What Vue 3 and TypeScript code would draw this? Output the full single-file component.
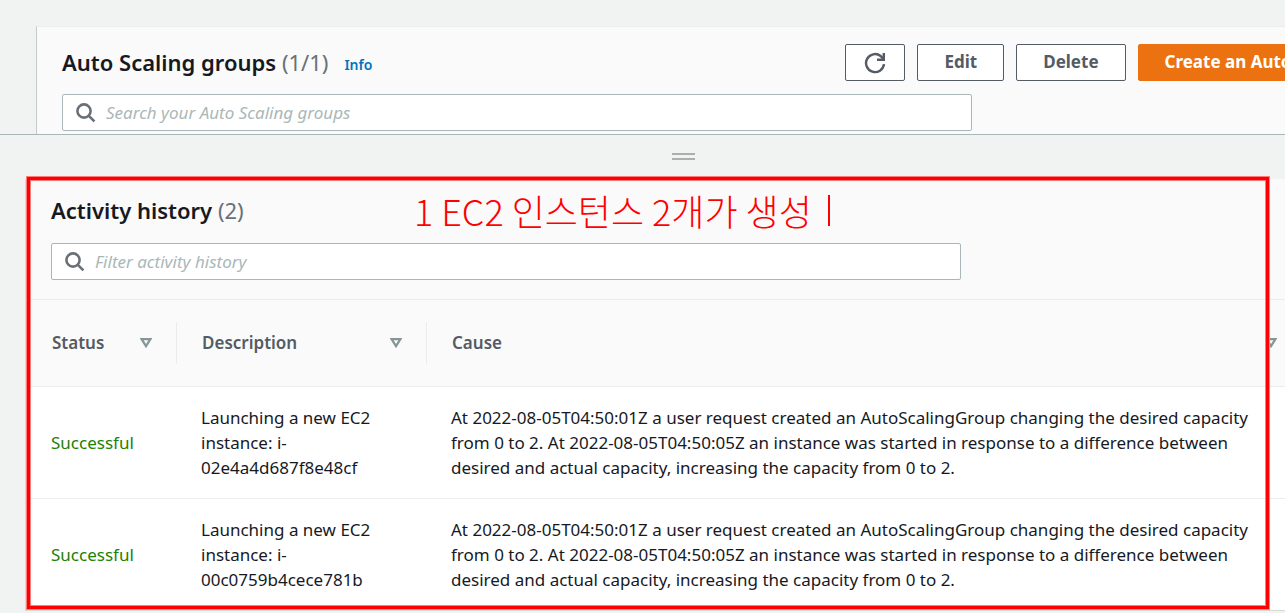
<script setup lang="ts">
import { ref } from 'vue'

interface Activity {
  status: string
  description: string
  cause: string
}

const cause =
  'At 2022-08-05T04:50:01Z a user request created an AutoScalingGroup changing the desired capacity from 0 to 2. At 2022-08-05T04:50:05Z an instance was started in response to a difference between desired and actual capacity, increasing the capacity from 0 to 2.'

const activities: Activity[] = [
  { status: 'Successful', description: 'Launching a new EC2 instance: i-02e4a4d687f8e48cf', cause },
  { status: 'Successful', description: 'Launching a new EC2 instance: i-00c0759b4cece781b', cause },
]

const columns = ['Status', 'Description', 'Cause']
const groupQuery = ref('')
const historyQuery = ref('')
</script>

<template>
  <div class="page">
    <section class="groups">
      <div class="groups-card">
        <header class="groups-header">
          <h2>Auto Scaling groups <span class="count">(1/1)</span></h2>
          <a class="info" href="#info">Info</a>
          <div class="actions">
            <button class="btn icon-btn" type="button" aria-label="Refresh">
              <svg width="22" height="22" viewBox="0 0 22 22" fill="none" stroke="currentColor" stroke-width="2.4">
                <path d="M20 12.2a9 9 0 1 1-3.4-8.2l2.4 2.4" />
                <path d="M19.8 1v6.8H13" />
              </svg>
            </button>
            <button class="btn" type="button">Edit</button>
            <button class="btn" type="button">Delete</button>
            <button class="btn primary" type="button">Create an Auto Scaling group</button>
          </div>
        </header>
        <label class="search">
          <svg width="20" height="20" viewBox="0 0 20 20" fill="none" stroke="currentColor" stroke-width="2.6">
            <circle cx="8" cy="8" r="6.6" />
            <path d="M12.6 12.6l5.8 5.8" />
          </svg>
          <input v-model="groupQuery" type="text" aria-label="Search groups" placeholder="Search your Auto Scaling groups" />
        </label>
      </div>
    </section>

    <div class="splitter"><span class="grip"></span></div>

    <section class="history">
      <div class="history-card">
        <header class="history-header">
          <h2>Activity history <span class="count">(2)</span></h2>
          <label class="search">
            <svg width="20" height="20" viewBox="0 0 20 20" fill="none" stroke="currentColor" stroke-width="2.6">
              <circle cx="8" cy="8" r="6.6" />
              <path d="M12.6 12.6l5.8 5.8" />
            </svg>
            <input v-model="historyQuery" type="text" aria-label="Filter history" placeholder="Filter activity history" />
          </label>
        </header>
        <table>
          <colgroup>
            <col class="col-status" />
            <col class="col-description" />
            <col />
          </colgroup>
          <thead>
            <tr>
              <th v-for="name in columns" :key="name" scope="col">
                <div class="th-content">
                  <span>{{ name }}</span>
                  <svg width="12" height="10" viewBox="0 0 12 10" fill="none" stroke="currentColor" stroke-width="2.2">
                    <path d="M1.6 1.2h8.8L6 8.2z" />
                  </svg>
                </div>
              </th>
            </tr>
          </thead>
          <tbody>
            <tr v-for="item in activities" :key="item.description">
              <td class="success">{{ item.status }}</td>
              <td>{{ item.description }}</td>
              <td>{{ item.cause }}</td>
            </tr>
          </tbody>
        </table>
      </div>
      <div class="marker"></div>
      <div class="note">1 EC2 인스턴스 2개가 생성<span class="caret"></span></div>
    </section>
  </div>
</template>

<style>
body {
  margin: 0;
  background: #f1f3f3;
}
</style>

<style scoped>
.page {
  overflow: hidden;
  color: #16191f;
  background: #f1f3f3;
  font-family: 'Noto Sans', 'Open Sans', sans-serif;
  font-size: 17px;
  line-height: 25px;
}

.groups {
  padding: 26px 0 0 36px;
}

.groups-card {
  box-sizing: border-box;
  margin-right: -178px;
  padding: 17px 25px 3px;
  border-top: 1px solid #eaeded;
  border-left: 1px solid #c3cccc;
  background: #fafafa;
}

.groups-header {
  display: flex;
  align-items: center;
  margin-bottom: 13px;
}

h2 {
  margin: 0;
  padding-bottom: 2px;
  font-size: 22px;
  line-height: 28px;
  font-weight: 600;
  white-space: nowrap;
}

.count {
  color: #687078;
  font-weight: 400;
}

.info {
  margin: 4px 0 0 16px;
  color: #0073bb;
  font-size: 14px;
  line-height: 20px;
  font-weight: 600;
  text-decoration: none;
}

.actions {
  display: flex;
  gap: 12px;
  margin-left: auto;
}

.btn {
  height: 37px;
  padding: 0 26px 2px;
  border: 1px solid #545b64;
  border-radius: 2px;
  background: #fff;
  color: #545b64;
  font: 700 17px/25px 'Noto Sans', 'Open Sans', sans-serif;
  white-space: nowrap;
}

.icon-btn {
  display: flex;
  align-items: center;
  justify-content: center;
  width: 60px;
  padding: 0;
}

.primary {
  border-color: #ec7211;
  background: #ec7211;
  color: #fff;
}

.search {
  box-sizing: border-box;
  display: flex;
  align-items: center;
  gap: 10px;
  width: 910px;
  height: 37px;
  padding: 0 13px;
  border: 1px solid #aab7b8;
  border-radius: 2px;
  background: #fff;
  color: #687078;
}

.search input {
  flex: 1;
  padding: 0;
  border: 0;
  outline: 0;
  background: transparent;
  color: #16191f;
  font: 17px/25px 'Noto Sans', 'Open Sans', sans-serif;
}

.search input::placeholder {
  color: #aab7b8;
  font-style: italic;
  opacity: 1;
}

.splitter {
  box-sizing: border-box;
  display: flex;
  justify-content: center;
  align-items: center;
  height: 45px;
  padding: 0 0 2px 82px;
  border-top: 1px solid #aab7b8;
}

.grip {
  width: 23px;
  height: 3px;
  border-top: 2px solid #adafaf;
  border-bottom: 2px solid #adafaf;
}

.history {
  position: relative;
  padding-left: 25px;
}

.history-card {
  margin-right: -17px;
  border-left: 1px solid #d5dbdb;
  border-bottom: 1px solid #d5dbdb;
  background: #fff;
}

.history-header {
  padding: 17px 25px 19px;
  border-bottom: 1px solid #eaeded;
  background: #fafafa;
}

.history-header h2 {
  margin-bottom: 17px;
}

table {
  width: 100%;
  border-collapse: separate;
  border-spacing: 0;
  table-layout: fixed;
}

.col-status {
  width: 151px;
}

.col-description {
  width: 250px;
}

th {
  padding: 22px 0;
  border-bottom: 1px solid #eaeded;
  background: #fafafa;
  color: #545b64;
  font-weight: 600;
  text-align: left;
}

.th-content {
  display: flex;
  align-items: center;
  justify-content: space-between;
  height: 42px;
  padding: 0 24px 0 26px;
  border-right: 1px solid #eaeded;
}

th + th .th-content {
  padding-left: 25px;
}

.th-content span {
  padding-bottom: 2px;
}

.th-content svg {
  color: #879596;
}

td {
  padding: 18px 25px;
  border-bottom: 1px solid #eaeded;
  vertical-align: middle;
}

td + td {
  padding-left: 24px;
}

tbody tr:last-child td {
  border-bottom: 0;
}

.success {
  color: #1d8102;
}

.marker {
  position: absolute;
  inset: -2px 16px 2px 27px;
  border: 3px solid #f00;
  box-shadow: 0 0 0 1px #ff7c7c, inset 0 0 0 1px #ff7c7c;
  pointer-events: none;
}

.note {
  position: absolute;
  top: 11px;
  left: 414px;
  display: flex;
  align-items: center;
  color: #f00;
  font: 300 36px/40px 'Noto Sans CJK KR', sans-serif;
  white-space: nowrap;
}

.caret {
  width: 2px;
  height: 31px;
  margin-left: 16px;
  background: #f00;
}
</style>
